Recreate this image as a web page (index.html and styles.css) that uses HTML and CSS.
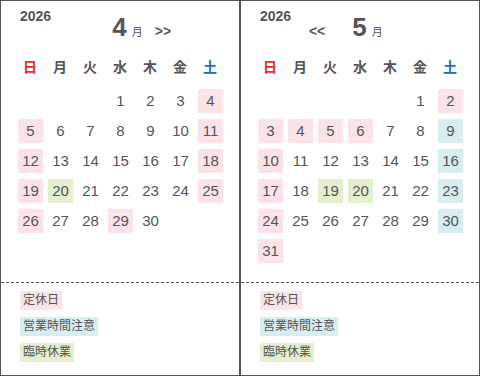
FILE: index.html
```html
<!DOCTYPE html>
<html lang="ja">
<head>
<meta charset="utf-8">
<title>営業カレンダー</title>
<link rel="stylesheet" href="styles.css">
</head>
<body>
<div class="wrap">
  <section class="cal">
    <div class="head">
      <div class="year">2026</div>
      <div class="month-row">
        <span class="nav prev hidden">&lt;&lt;</span>
        <span class="month"><span class="num">4</span><span class="unit">月</span></span>
        <span class="nav next">&gt;&gt;</span>
      </div>
    </div>
    <div class="week">
      <span class="sun">日</span><span>月</span><span>火</span><span>水</span><span>木</span><span>金</span><span class="sat">土</span>
    </div>
    <div class="days">
      <span class="d start-4">1</span><span class="d">2</span><span class="d">3</span><span class="d off">4</span>
      <span class="d off">5</span><span class="d">6</span><span class="d">7</span><span class="d">8</span><span class="d">9</span><span class="d">10</span><span class="d off">11</span>
      <span class="d off">12</span><span class="d">13</span><span class="d">14</span><span class="d">15</span><span class="d">16</span><span class="d">17</span><span class="d off">18</span>
      <span class="d off">19</span><span class="d tmp">20</span><span class="d">21</span><span class="d">22</span><span class="d">23</span><span class="d">24</span><span class="d off">25</span>
      <span class="d off">26</span><span class="d">27</span><span class="d">28</span><span class="d off">29</span><span class="d">30</span>
    </div>
    <ul class="legend">
      <li><span class="tag off">定休日</span></li>
      <li><span class="tag warn">営業時間注意</span></li>
      <li><span class="tag tmp">臨時休業</span></li>
    </ul>
  </section>
  <section class="cal">
    <div class="head">
      <div class="year">2026</div>
      <div class="month-row">
        <span class="nav prev">&lt;&lt;</span>
        <span class="month"><span class="num">5</span><span class="unit">月</span></span>
        <span class="nav next hidden">&gt;&gt;</span>
      </div>
    </div>
    <div class="week">
      <span class="sun">日</span><span>月</span><span>火</span><span>水</span><span>木</span><span>金</span><span class="sat">土</span>
    </div>
    <div class="days">
      <span class="d start-6">1</span><span class="d off">2</span>
      <span class="d off">3</span><span class="d off">4</span><span class="d off">5</span><span class="d off">6</span><span class="d">7</span><span class="d">8</span><span class="d warn">9</span>
      <span class="d off">10</span><span class="d">11</span><span class="d">12</span><span class="d">13</span><span class="d">14</span><span class="d">15</span><span class="d warn">16</span>
      <span class="d off">17</span><span class="d">18</span><span class="d tmp">19</span><span class="d tmp">20</span><span class="d">21</span><span class="d">22</span><span class="d warn">23</span>
      <span class="d off">24</span><span class="d">25</span><span class="d">26</span><span class="d">27</span><span class="d">28</span><span class="d">29</span><span class="d warn">30</span>
      <span class="d off">31</span>
    </div>
    <ul class="legend">
      <li><span class="tag off">定休日</span></li>
      <li><span class="tag warn">営業時間注意</span></li>
      <li><span class="tag tmp">臨時休業</span></li>
    </ul>
  </section>
</div>
</body>
</html>
```
FILE: styles.css
```css
html, body {
  margin: 0;
  padding: 0;
  background: #fff;
}
body {
  font-family: "Liberation Sans", "Noto Sans CJK JP", sans-serif;
  color: #555;
}
.wrap {
  display: flex;
  width: 480px;
  height: 376px;
}
.cal {
  width: 240px;
  height: 376px;
  box-sizing: border-box;
  border: 1px solid #555;
  display: flex;
  flex-direction: column;
}
.head {
  display: grid;
  height: 34px;
  padding-top: 7px;
}
.year, .month-row {
  grid-area: 1 / 1;
}
.year {
  align-self: start;
  padding-left: 19px;
  font-size: 14px;
  line-height: 16px;
  font-weight: bold;
  color: #555;
}
.month-row {
  align-self: end;
  display: flex;
  justify-content: center;
  align-items: baseline;
  line-height: 30px;
  height: 30px;
}
.nav {
  font-size: 14px;
  font-weight: bold;
  color: #555;
}
.hidden {
  visibility: hidden;
}
.prev {
  margin-right: 27px;
}
.next {
  margin-left: 12px;
}
.month {
  display: flex;
  align-items: baseline;
}
.num {
  font-size: 26px;
  font-weight: bold;
  color: #555;
}
.unit {
  font-size: 11px;
  margin-left: 5px;
  color: #555;
}
.week {
  display: grid;
  grid-template-columns: repeat(7, 30px);
  justify-content: center;
  margin-top: 10px;
  height: 30px;
  line-height: 30px;
  font-size: 14px;
  font-weight: bold;
  text-align: center;
  color: #555;
}
.week .sun { color: #ee2a24; }
.week .sat { color: #1a70c0; }
.days {
  display: grid;
  grid-template-columns: repeat(7, 30px);
  grid-auto-rows: 30px;
  justify-content: center;
  margin-top: 4px;
  height: 180px;
  align-content: start;
}
.d {
  width: 25px;
  height: 24px;
  margin: 3px 2px 3px 3px;
  line-height: 24px;
  text-align: center;
  font-size: 15px;
  color: #555;
}
.start-4 { grid-column-start: 4; }
.start-6 { grid-column-start: 6; }
.off { background: #fbe3e8; }
.warn { background: #d8edf0; }
.tmp { background: #e3efcd; }
.legend {
  list-style: none;
  margin: 16px 0 0;
  padding: 9px 0 0 19px;
  background: repeating-linear-gradient(to right, #555 0 3px, transparent 3px 5px) top left / 100% 1px no-repeat;
  display: flex;
  flex-direction: column;
  align-items: flex-start;
  gap: 7px;
}
.tag {
  display: block;
  font-size: 12px;
  line-height: 19px;
  padding: 0 3px;
  color: #555;
}
```
